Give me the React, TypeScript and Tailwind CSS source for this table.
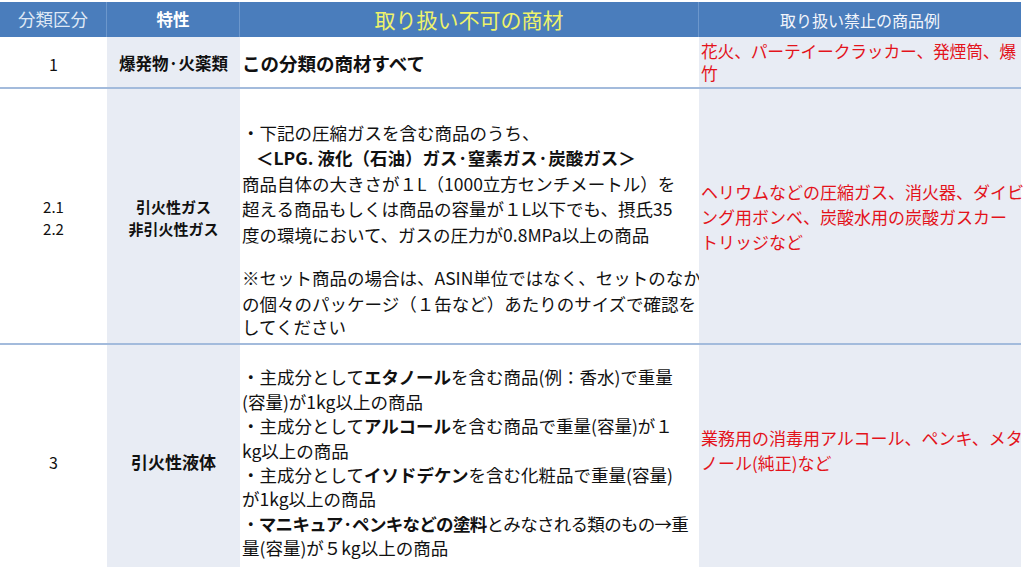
import React from "react";

const font = { fontFamily: '"Noto Sans CJK JP", "Noto Sans", sans-serif' };

function B({ children }: { children: React.ReactNode }) {
  return <span className="font-bold">{children}</span>;
}

export default function App() {
  return (
    <div className="w-[1024px] h-[567px] overflow-hidden bg-white text-[#111]" style={font}>
      <div className="w-[1021px] pt-[2px]">
        {/* Header */}
        <div className="grid grid-cols-[107px_133px_459px_322px] h-[35px] bg-[#4a7dbc]">
          <div className="flex items-center justify-center border-r border-[#6c97cc] text-[17.5px] text-[#dfe8f5]">
            分類区分
          </div>
          <div className="flex items-center justify-center border-r border-[#6c97cc] text-[16.5px] font-bold text-white">
            特性
          </div>
          <div className="flex items-center justify-center border-r border-[#6c97cc] text-[21px] text-[#eef26a]">
            取り扱い不可の商材
          </div>
          <div className="flex items-center justify-center text-[16px] text-[#f2f5fb]">
            取り扱い禁止の商品例
          </div>
        </div>

        {/* Row 1 */}
        <div className="grid grid-cols-[107px_133px_459px_322px] h-[52px] border-b-2 border-[#a3bbdc]">
          <div className="flex items-center justify-center text-[16px] pt-[3px]">1</div>
          <div className="flex items-center justify-center bg-[#e8ecf4] text-[16.5px] font-bold whitespace-nowrap pt-[3px]">
            爆発物·火薬類
          </div>
          <div className="flex items-center pl-[2px] text-[18.5px] font-bold pt-[3px]">この分類の商材すべて</div>
          <div className="bg-[#e8ecf4] pl-[2px] pt-[3px] text-[16.8px] tracking-[-0.2px] leading-[22px] text-[#e3131b] whitespace-nowrap overflow-hidden">
            花火、パーテイークラッカー、発煙筒、爆
            <br />竹
          </div>
        </div>

        {/* Row 2 */}
        <div className="grid grid-cols-[107px_133px_459px_322px] h-[256px] border-b-2 border-[#a3bbdc]">
          <div className="flex flex-col items-center justify-center text-[15px] leading-[22px] pt-[4px]">
            <span>2.1</span>
            <span>2.2</span>
          </div>
          <div className="flex flex-col items-center justify-center bg-[#e8ecf4] text-[15px] leading-[22px] font-bold pt-[4px]">
            <span>引火性ガス</span>
            <span>非引火性ガス</span>
          </div>
          <div className="flex flex-col justify-center pl-[2px] pt-[26px] text-[17.5px] leading-[25.5px] whitespace-nowrap">
            <div>・下記の圧縮ガスを含む商品のうち、</div>
            <div className="pl-[14px] font-bold">＜LPG. 液化（石油）ガス·窒素ガス·炭酸ガス＞</div>
            <div>商品自体の大きさが１L（1000立方センチメートル）を</div>
            <div>超える商品もしくは商品の容量が１L以下でも、摂氏35</div>
            <div>度の環境において、ガスの圧力が0.8MPa以上の商品</div>
            <div className="h-[18px]" />
            <div>※セット商品の場合は、ASIN単位ではなく、セットのなか</div>
            <div>の個々のパッケージ（１缶など）あたりのサイズで確認を</div>
            <div className="leading-[22px]">してください</div>
          </div>
          <div className="flex flex-col justify-center bg-[#e8ecf4] pl-[2px] text-[17px] leading-[25px] text-[#e3131b] whitespace-nowrap">
            <div>ヘリウムなどの圧縮ガス、消火器、ダイビ</div>
            <div>ング用ボンベ、炭酸水用の炭酸ガスカー</div>
            <div>トリッジなど</div>
          </div>
        </div>

        {/* Row 3 */}
        <div className="grid grid-cols-[107px_133px_459px_322px] h-[222px]">
          <div className="flex items-center justify-center text-[16px] pt-[12px]">3</div>
          <div className="flex items-center justify-center bg-[#e8ecf4] text-[17px] font-bold pt-[12px]">
            引火性液体
          </div>
          <div className="flex flex-col justify-center pl-[2px] pt-[14px] text-[17.5px] leading-[24.4px] whitespace-nowrap">
            <div>・主成分として<B>エタノール</B>を含む商品(例：香水)で重量</div>
            <div>(容量)が1kg以上の商品</div>
            <div>・主成分として<B>アルコール</B>を含む商品で重量(容量)が１</div>
            <div>kg以上の商品</div>
            <div>・主成分として<B>イソドデケン</B>を含む化粧品で重量(容量)</div>
            <div>が1kg以上の商品</div>
            <div className="tracking-[-0.7px]">・<B>マニキュア·ペンキなどの塗料</B>とみなされる類のもの→重</div>
            <div>量(容量)が５kg以上の商品</div>
          </div>
          <div className="flex flex-col justify-center bg-[#e8ecf4] pl-[2px] pb-[12px] text-[17px] leading-[25px] text-[#e3131b] whitespace-nowrap">
            <div>業務用の消毒用アルコール、ペンキ、メタ</div>
            <div>ノール(純正)など</div>
          </div>
        </div>
      </div>
    </div>
  );
}
